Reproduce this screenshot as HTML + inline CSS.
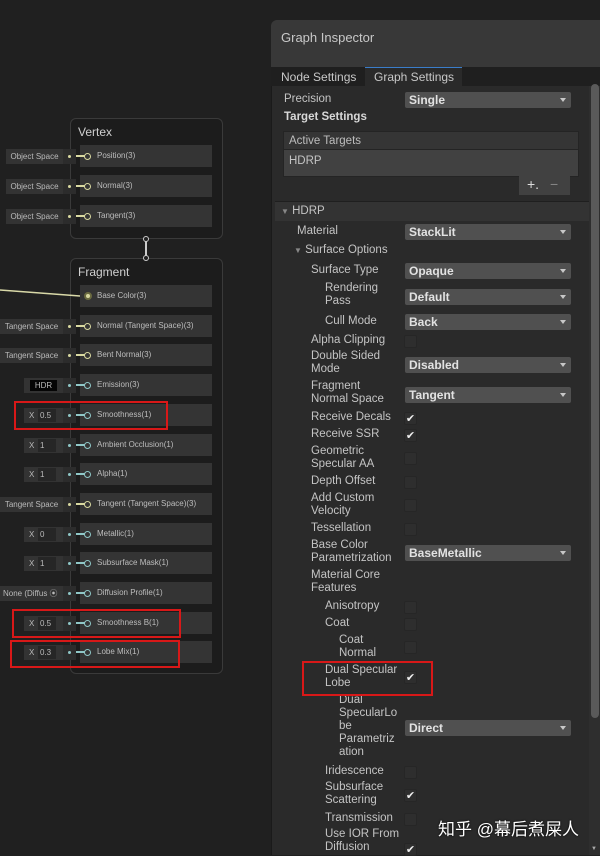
<!DOCTYPE html>
<html><head><meta charset="utf-8">
<style>
*{margin:0;padding:0;box-sizing:border-box}
body{width:600px;height:855px;background:#202020;position:relative;overflow:hidden;font-family:"Liberation Sans","Noto Sans CJK SC",sans-serif;color:#c8c8c8}
.a{position:absolute}
.node{position:absolute;border:1px solid #3a3a3a;border-radius:6px;background:#1c1c1c}
.slot{position:absolute;left:80px;width:132px;height:22px;background:#343434;font-size:8px;color:#bdbdbd;padding-left:17px;line-height:22px}
.con{position:absolute;width:7px;height:7px;border:1.5px solid #8fc7c7;border-radius:50%}
.wire{position:absolute;height:2px;background:#8fc7c7}
.dot{position:absolute;width:3px;height:3px;border-radius:50%;background:#cfe}
.inb{position:absolute;height:15px;background:#333;font-size:8px;color:#bbb;line-height:15px;text-align:center}
.red{position:absolute;border:2px solid #d81818}
.lbl{position:absolute;font-size:11.5px;color:#c4c4c4;line-height:13px}
.dd{position:absolute;left:405px;width:166px;height:16px;background:#505050;border-radius:2px;font-size:12px;font-weight:bold;color:#e2e2e2;line-height:16px;padding-left:4px}
.dd:after{content:"";position:absolute;right:5px;top:6px;border-left:3.5px solid transparent;border-right:3.5px solid transparent;border-top:4px solid #c8c8c8}
.cb{position:absolute;left:404px;width:13px;height:13px;background:#2e2e2e;border:1px solid #262626;border-radius:2px;font-size:11px;color:#eee;line-height:12px;text-align:center}
</style></head><body>
<div class="node" style="left:70px;top:118px;width:153px;height:121px"></div>
<div class="a" style="left:78px;top:125px;font-size:12px;color:#d0d0d0">Vertex</div>
<div class="node" style="left:70px;top:258px;width:153px;height:416px"></div>
<div class="a" style="left:78px;top:265px;font-size:12px;color:#d0d0d0">Fragment</div>
<div class="a" style="left:145px;top:240px;width:1.5px;height:17px;background:#ccc"></div>
<div class="a" style="left:143px;top:236px;width:6px;height:6px;border:1.5px solid #ccc;border-radius:50%;background:#202020"></div>
<div class="a" style="left:143px;top:255px;width:6px;height:6px;border:1.5px solid #ccc;border-radius:50%;background:#202020"></div>
<svg class="a" style="left:0;top:0" width="100" height="310"><path d="M0 290 L80 296" stroke="#d9d9a8" stroke-width="1.5" fill="none"/></svg>
<div id="g"></div>
<div class="red" style="left:14px;top:401px;width:154px;height:29px"></div>
<div class="red" style="left:12px;top:609px;width:169px;height:29px"></div>
<div class="red" style="left:10px;top:640px;width:170px;height:28px"></div>

<div class="a" style="left:271px;top:20px;width:329px;height:835px;background:#2a2a2a;border-top-left-radius:6px;border-left:1px solid #1a1a1a"></div>
<div class="a" style="left:271px;top:20px;width:329px;height:48px;background:#383838;border-top-left-radius:6px"></div>
<div class="a" style="left:281px;top:30px;font-size:13px;color:#c8c8c8">Graph Inspector</div>
<div class="a" style="left:271px;top:67px;width:329px;height:19px;background:#1f1f1f"></div>
<div class="a" style="left:365px;top:67px;width:97px;height:19px;background:#2a2a2a;border-top:1.5px solid #3a7dc9"></div>
<div class="a" style="left:281px;top:70px;font-size:12px;color:#c8c8c8">Node Settings</div>
<div class="a" style="left:374px;top:70px;font-size:12px;color:#c8c8c8">Graph Settings</div>
<div class="a" style="left:589px;top:86px;width:11px;height:769px;background:#2e2e2e"></div>
<div class="a" style="left:591px;top:86px;font-size:6px;color:#aaa">▲</div>
<div class="a" style="left:591px;top:846px;font-size:6px;color:#aaa">▼</div>
<div class="a" style="left:591px;top:84px;width:8px;height:634px;background:#5a5a5a;border-radius:4px"></div>
<div class="lbl" style="left:284px;top:93px">Precision</div>
<div class="dd" style="top:92px">Single</div>
<div class="lbl" style="left:284px;top:111px;font-weight:bold;color:#d8d8d8">Target Settings</div>
<div class="a" style="left:283px;top:131px;width:296px;height:19px;background:#353535;border:1px solid #242424"></div>
<div class="lbl" style="left:289px;top:135px;color:#bdbdbd">Active Targets</div>
<div class="a" style="left:283px;top:149px;width:296px;height:28px;background:#414141;border:1px solid #242424"></div>
<div class="lbl" style="left:289px;top:155px">HDRP</div>
<div class="a" style="left:519px;top:176px;width:51px;height:19px;background:#414141"></div>
<div class="a" style="left:527px;top:176px;font-size:14px;color:#ddd">+.</div>
<div class="a" style="left:550px;top:176px;font-size:14px;color:#888">−</div>
<div class="a" style="left:275px;top:201px;width:314px;height:20px;background:#333;border-top:1px solid #1f1f1f"></div>
<div class="lbl" style="left:281px;top:205px"><span style="font-size:8px;color:#888">▼</span> HDRP</div>
<div id="ins"></div>
<div class="red" style="left:302px;top:661px;width:131px;height:35px"></div>
<div class="a" style="left:438px;top:815px;font-size:17px;color:#fff;text-shadow:0 0 2px #000">知乎 @幕后煮屎人</div>

<script>
var g=document.getElementById('g'),h='';
var rows=[[156,'Position(3)','os','Object Space'],[186,'Normal(3)','os','Object Space'],[216,'Tangent(3)','os','Object Space'],
[296,'Base Color(3)','bc'],[326,'Normal (Tangent Space)(3)','os','Tangent Space'],[355,'Bent Normal(3)','os','Tangent Space'],
[385,'Emission(3)','hdr'],[415,'Smoothness(1)','x','0.5'],[445,'Ambient Occlusion(1)','x','1'],[474,'Alpha(1)','x','1'],
[504,'Tangent (Tangent Space)(3)','os','Tangent Space'],[534,'Metallic(1)','x','0'],[563,'Subsurface Mask(1)','x','1'],
[593,'Diffusion Profile(1)','dp'],[623,'Smoothness B(1)','x','0.5'],[652,'Lobe Mix(1)','x','0.3']];
rows.forEach(function(r){var y=r[0];h+='<div class="slot" style="top:'+(y-11)+'px">'+r[1]+'</div>';
var yl=(r[2]=='os'||r[2]=='bc')?'#d8d8a0':'#8fc7c7';
if(r[2]=='bc'){h+='<div class="a" style="left:84px;top:'+(y-4)+'px;width:8px;height:8px;border-radius:50%;background:#d8d8a0;border:2px solid #6a6a40"></div>';return;}
h+='<div class="wire" style="left:75px;top:'+(y-1)+'px;width:10px;background:'+yl+'"></div>';
h+='<div class="con" style="left:84px;top:'+(y-3.5)+'px;border-color:'+yl+';background:#343434"></div>';
h+='<div class="inb" style="left:63px;top:'+(y-7)+'px;width:13px;background:#2c2c2c"></div><div class="dot" style="left:68px;top:'+(y-1.5)+'px;background:'+yl+'"></div>';
if(r[2]=='os')h+='<div class="inb" style="left:'+(r[3]=='Object Space'?6:0)+'px;top:'+(y-7)+'px;width:'+(r[3]=='Object Space'?57:63)+'px;font-size:8px">'+r[3]+'</div>';
if(r[2]=='hdr')h+='<div class="inb" style="left:24px;top:'+(y-7)+'px;width:39px"><span style="display:inline-block;background:#050505;width:27px;height:11px;line-height:11px;margin-top:2px">HDR</span></div>';
if(r[2]=='x')h+='<div class="inb" style="left:24px;top:'+(y-7)+'px;width:39px;text-align:left;padding-left:5px">X<span style="position:absolute;left:14px;top:1px;width:18px;height:13px;background:#262626;line-height:13px;padding-left:2px">'+r[3]+'</span></div>';
if(r[2]=='dp')h+='<div class="inb" style="left:0;top:'+(y-7)+'px;width:63px;text-align:left;padding-left:3px;overflow:hidden;white-space:nowrap">None (Diffus ⦿</div>';
});
g.innerHTML=h;
var ins=[
['Material',297,225,'dd','StackLit'],['<span style="font-size:8px;color:#888">▼</span> Surface Options',294,244],
['Surface Type',311,264,'dd','Opaque'],['Rendering<br>Pass',325,282,'dd','Default',297],['Cull Mode',325,315,'dd','Back'],
['Alpha Clipping',311,334,'cb',''],['Double Sided<br>Mode',311,350,'dd','Disabled',365],['Fragment<br>Normal Space',311,380,'dd','Tangent',395],
['Receive Decals',311,411,'cb','✔'],['Receive SSR',311,428,'cb','✔'],['Geometric<br>Specular AA',311,445,'cb','',458],
['Depth Offset',311,475,'cb',''],['Add Custom<br>Velocity',311,492,'cb','',505],['Tessellation',311,522,'cb',''],
['Base Color<br>Parametrization',311,539,'dd','BaseMetallic',553],['Material Core<br>Features',311,569],
['Anisotropy',325,600,'cb',''],['Coat',325,617,'cb',''],['Coat<br>Normal',339,634,'cb','',647],['Dual Specular<br>Lobe',325,664,'cb','✔',677],
['Dual<br>SpecularLo<br>be<br>Parametriz<br>ation',339,694,'dd','Direct',728],['Iridescence',325,765,'cb',''],
['Subsurface<br>Scattering',325,781,'cb','✔',795],['Transmission',325,812,'cb',''],['Use IOR From<br>Diffusion',325,828,'cb','✔',849]];
var s='';ins.forEach(function(r){s+='<div class="lbl" style="left:'+r[1]+'px;top:'+r[2]+'px">'+r[0]+'</div>';
if(r[3]=='dd')s+='<div class="dd" style="top:'+((r[5]||r[2]+7)-8)+'px">'+r[4]+'</div>';
if(r[3]=='cb')s+='<div class="cb" style="top:'+((r[5]||r[2]+7)-6)+'px">'+r[4]+'</div>';});
document.getElementById('ins').innerHTML=s;
</script>
</body></html>
